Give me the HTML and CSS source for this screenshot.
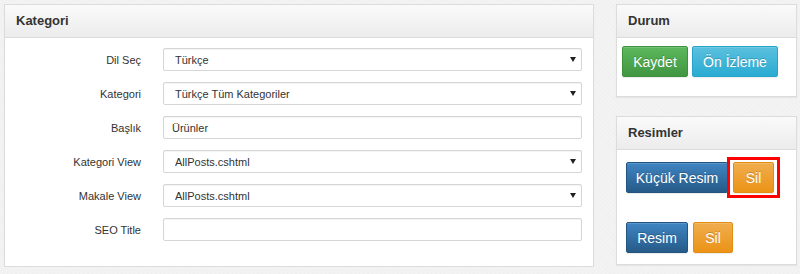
FILE: index.html
```html
<!DOCTYPE html>
<html lang="tr">
<head>
    <meta charset="UTF-8">
    <title>Kategori Düzenle</title>
    <link rel="stylesheet" href="styles.css">
</head>
<body>

<div class="page">
    <div class="main">
        <div class="panel">
            <div class="panel-heading">Kategori</div>
            <div class="panel-body form">
                <div class="row">
                    <label>Dil Seç</label>
                    <span class="select"><select><option>Türkçe</option></select></span>
                </div>
                <div class="row">
                    <label>Kategori</label>
                    <span class="select"><select><option>Türkçe Tüm Kategoriler</option></select></span>
                </div>
                <div class="row">
                    <label>Başlık</label>
                    <input type="text" value="Ürünler">
                </div>
                <div class="row">
                    <label>Kategori View</label>
                    <span class="select"><select><option>AllPosts.cshtml</option></select></span>
                </div>
                <div class="row">
                    <label>Makale View</label>
                    <span class="select"><select><option>AllPosts.cshtml</option></select></span>
                </div>
                <div class="row">
                    <label>SEO Title</label>
                    <input type="text" value="">
                </div>
            </div>
        </div>
    </div>

    <div class="side">
        <div class="panel durum">
            <div class="panel-heading">Durum</div>
            <div class="panel-body">
                <button class="btn btn-success">Kaydet</button>
                <button class="btn btn-info">Ön İzleme</button>
            </div>
        </div>

        <div class="panel resimler">
            <div class="panel-heading">Resimler</div>
            <div class="panel-body">
                <div class="btn-line">
                    <button class="btn btn-primary">Küçük Resim</button>
                    <span class="highlight"><button class="btn btn-warning">Sil</button></span>
                </div>
                <div class="btn-line">
                    <button class="btn btn-primary">Resim</button>
                    <button class="btn btn-warning">Sil</button>
                </div>
            </div>
        </div>
    </div>
</div>

</body>
</html>
```

FILE: styles.css
```css
body {
    margin: 0;
    background-color: #f3f3f3;
    background-image: repeating-linear-gradient(45deg, rgba(0,0,0,0.012) 0 1px, transparent 1px 3px);
    font-family: "Liberation Sans", Arial, sans-serif;
    color: #333;
}
.page {
    display: flex;
    align-items: flex-start;
    padding: 4px 3px 0 4px;
    gap: 22px;
}
.main {
    width: 590px;
}
.side {
    width: 181px;
    display: flex;
    flex-direction: column;
    gap: 19px;
}
.panel {
    background: #fff;
    border: 1px solid #dcdcdc;
    box-shadow: 0 1px 1px rgba(0, 0, 0, 0.05);
}
.panel-heading {
    height: 32px;
    line-height: 32px;
    padding: 0 11px;
    font-size: 13px;
    font-weight: bold;
    color: #333;
    background: linear-gradient(to bottom, #fafafa 0%, #ececec 100%);
    border-bottom: 1px solid #dcdcdc;
}
.form {
    padding: 10px 11px 25px 0;
    display: flex;
    flex-direction: column;
    gap: 11px;
}
.row {
    display: flex;
    align-items: center;
    gap: 22px;
}
.row label {
    width: 136px;
    text-align: right;
    font-size: 11px;
    color: #333;
}
.row input,
.row .select {
    flex: 1;
}
.row input,
.row select {
    box-sizing: border-box;
    width: 100%;
    height: 23px;
    border: 1px solid #d6d6d6;
    border-radius: 2px;
    background: #fff;
    font-family: "Liberation Sans", Arial, sans-serif;
    font-size: 11px;
    color: #333;
    box-shadow: inset 0 1px 1px rgba(0, 0, 0, 0.05);
}
.row input {
    padding: 0 8px;
}
.row select {
    appearance: none;
    -webkit-appearance: none;
    padding: 0 20px 0 11px;
    display: block;
}
.select {
    position: relative;
    display: block;
}
.select::after {
    content: "";
    position: absolute;
    right: 6px;
    top: 9px;
    border-left: 3px solid transparent;
    border-right: 3px solid transparent;
    border-top: 5px solid #222;
}
.durum .panel-body {
    padding: 8px 5px 19px;
    display: flex;
    gap: 4px;
}
.resimler .panel-body {
    padding: 12px 5px 11px 9px;
    display: flex;
    flex-direction: column;
    gap: 29px;
}
.btn-line {
    display: flex;
    align-items: center;
    gap: 4px;
}
.btn {
    height: 31px;
    padding: 0;
    white-space: nowrap;
    font-family: "Liberation Sans", Arial, sans-serif;
    font-size: 14px;
    color: #fff;
    border-radius: 2px;
    border: 1px solid transparent;
    text-shadow: 0 -1px 0 rgba(0, 0, 0, 0.2);
    box-shadow: inset 0 1px 0 rgba(255, 255, 255, 0.15), 0 1px 1px rgba(0, 0, 0, 0.08);
}
.btn-success {
    width: 66px;
    background: linear-gradient(to bottom, #5cb85c 0%, #419641 100%);
    border-color: #3e8f3e;
}
.btn-info {
    width: 86px;
    background: linear-gradient(to bottom, #5bc0de 0%, #2aabd2 100%);
    border-color: #28a4c9;
}
.btn-primary {
    background: linear-gradient(to bottom, #3f85c2 0%, #265a88 100%);
    border-color: #245580;
}
.btn-warning {
    width: 41px;
    background: linear-gradient(to bottom, #f0ad4e 0%, #eb9316 100%);
    border-color: #e38d13;
}
.btn-line:first-child .btn-primary {
    width: 102px;
}
.btn-line:last-child .btn-primary {
    width: 62px;
}
.btn-line:last-child .btn-warning {
    width: 40px;
    margin-left: 1px;
}
.highlight {
    display: inline-block;
    border: 3px solid #ff0000;
    padding: 2px 3px;
    margin: -5px -6px -5px -5px;
}
```
